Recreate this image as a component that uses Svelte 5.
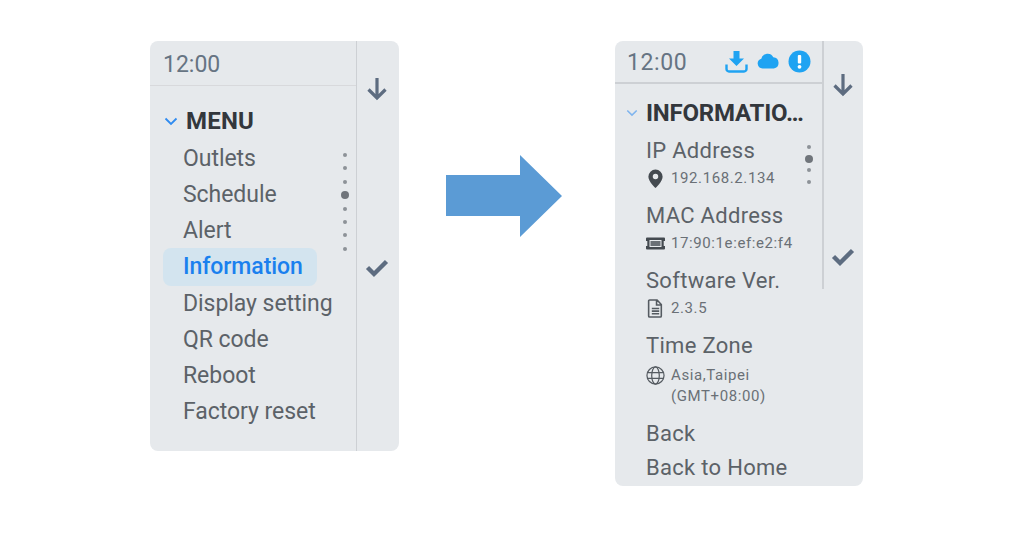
<script>
  const menuItems = ['Outlets', 'Schedule', 'Alert', 'Information', 'Display setting', 'QR code', 'Reboot', 'Factory reset'];
  const activeItem = 'Information';
  const menuDots = [0, 1, 2, 3, 4, 5, 6, 7];
  const infoDots = [0, 1, 2, 3];
</script>

{#snippet arrowDown()}
  <svg class="side-icon" viewBox="0 0 24 24"><path d="M12 1v20M3.500 12.500L12 21l8.500-8.500" fill="none" stroke="currentColor" stroke-width="3.200"/></svg>
{/snippet}

{#snippet check()}
  <svg class="side-icon" viewBox="0 0 24 24"><path d="M2.500 12.500l6.500 6.500L21.500 6.500" fill="none" stroke="currentColor" stroke-width="4.400"/></svg>
{/snippet}

{#snippet chevron()}
  <svg class="chevron" viewBox="0 0 14 9"><path d="M1.500 1.500L7 7l5.500-5.500" fill="none" stroke="currentColor" stroke-width="1.800"/></svg>
{/snippet}

<div class="page">
  <section class="panel menu-panel">
    <div class="main">
      <header class="status"><span class="clock">12:00</span></header>
      <div class="title-row">
        {@render chevron()}
        <h2>MENU</h2>
      </div>
      <ul class="menu">
        {#each menuItems as item}
          <li class:active={item === activeItem}>{item}</li>
        {/each}
      </ul>
      <div class="dots menu-dots">
        {#each menuDots as d}
          <i class:big={d === 3}></i>
        {/each}
      </div>
    </div>
    <aside class="side">
      {@render arrowDown()}
      {@render check()}
    </aside>
  </section>

  <svg class="big-arrow" viewBox="0 0 116 82"><path d="M0 20H74V0L116 41 74 82V61H0Z" fill="#5b9bd5"/></svg>

  <section class="panel info-panel">
    <div class="main">
      <header class="status">
        <span class="clock">12:00</span>
        <div class="status-icons">
          <svg width="23" height="23" viewBox="0 0 23 23"><path d="M8.500 1h6v7.500h4.500l-7.500 7.500L4 8.500h4.500z" fill="#1fa3f2"/><path d="M1.500 14.500v4.500a2.500 2.500 0 0 0 2.500 2.500h15a2.500 2.500 0 0 0 2.500-2.500v-4.500" fill="none" stroke="#1fa3f2" stroke-width="2.400"/></svg>
          <svg width="22" height="16" viewBox="0 0 22 16"><path d="M5.500 15.500a5 5 0 0 1-1.200-9.800 6.500 6.500 0 0 1 12-1.500 5.700 5.700 0 0 1 .5 11.300z" fill="#1fa3f2"/></svg>
          <svg width="23" height="23" viewBox="0 0 23 23"><circle cx="11.500" cy="11.500" r="11" fill="#1fa3f2"/><rect x="9.800" y="5" width="3.400" height="8.500" rx="1" fill="#fff"/><circle cx="11.500" cy="16.800" r="1.900" fill="#fff"/></svg>
        </div>
      </header>
      <div class="title-row">
        {@render chevron()}
        <h2>INFORMATIO…</h2>
      </div>
      <div class="info">
        <div class="info-item">
          <div class="label">IP Address</div>
          <div class="value">
            <svg class="value-icon" viewBox="0 0 16 16"><path d="M8 .5a6 6 0 0 0-6 6c0 4 6 9.500 6 9.500s6-5.500 6-9.500a6 6 0 0 0-6-6zm0 8.200a2.300 2.300 0 1 1 0-4.600 2.300 2.300 0 0 1 0 4.600z" fill="#444a50"/></svg>
            <span>192.168.2.134</span>
          </div>
        </div>
        <div class="info-item">
          <div class="label">MAC Address</div>
          <div class="value">
            <svg class="value-icon" viewBox="0 0 19 13"><path fill-rule="evenodd" d="M1 .5h17a1 1 0 0 1 1 1v2.500h-1.300v5H19v2.500a1 1 0 0 1-1 1H1a1 1 0 0 1-1-1V9h1.300V4H0V1.500a1 1 0 0 1 1-1zM3.500 3v7h12V3z" fill="#444a50"/><rect x="4.500" y="4" width="10" height="5" fill="#6a7076"/></svg>
            <span>17:90:1e:ef:e2:f4</span>
          </div>
        </div>
        <div class="info-item">
          <div class="label">Software Ver.</div>
          <div class="value">
            <svg class="value-icon" viewBox="0 0 16 18"><path d="M2.500 1h7l4 4.200V16a1 1 0 0 1-1 1h-10a1 1 0 0 1-1-1V2a1 1 0 0 1 1-1zM9 1.500v4.200h4M4.500 9h7M4.500 11.500h7M4.500 14h7" fill="none" stroke="#555b61" stroke-width="1.500"/></svg>
            <span>2.3.5</span>
          </div>
        </div>
        <div class="info-item zone">
          <div class="label">Time Zone</div>
          <div class="value">
            <svg class="value-icon" viewBox="0 0 20 20"><g fill="none" stroke="#555b61" stroke-width="1.300"><circle cx="10" cy="10" r="9"/><ellipse cx="10" cy="10" rx="4" ry="9"/><path d="M1.500 7h17M1.500 13h17"/></g></svg>
            <span>Asia,Taipei<br />(GMT+08:00)</span>
          </div>
        </div>
        <div class="action">Back</div>
        <div class="action">Back to Home</div>
      </div>
      <div class="dots info-dots">
        {#each infoDots as d}
          <i class:big={d === 1}></i>
        {/each}
      </div>
    </div>
    <aside class="side">
      {@render arrowDown()}
      {@render check()}
    </aside>
  </section>
</div>

<style>
  :global(body) {
    margin: 0;
    background: #fff;
  }

  .page {
    width: 1030px;
    height: 540px;
    box-sizing: border-box;
    padding: 41px 0 0 150px;
    display: flex;
    align-items: flex-start;
    font-family: Roboto, "Liberation Sans", sans-serif;
    color: #5c6268;
  }

  .panel {
    width: 249px;
    flex: none;
    display: flex;
    align-items: flex-start;
    background: #e6e9ec;
    border-radius: 8px;
    overflow: hidden;
  }

  .menu-panel {
    height: 410px;
  }

  .info-panel {
    height: 445px;
    width: 248px;
  }

  .big-arrow {
    width: 116px;
    height: 82px;
    flex: none;
    margin: 114px 53px 0 47px;
  }

  .main {
    position: relative;
    width: 206px;
    flex: none;
  }

  .info-panel .main {
    width: 207px;
  }

  .side {
    width: 42px;
    flex: none;
    box-sizing: border-box;
    border-left: 1px solid #cdd0d4;
    color: #5d6c80;
    display: flex;
    flex-direction: column;
    align-items: center;
    height: 410px;
    padding: 36px 2px 0 0;
    gap: 154px;
  }

  .info-panel .side {
    height: 248px;
    border-left: 2px solid #cdd0d4;
    padding-top: 32px;
    gap: 147px;
  }

  .side-icon {
    width: 24px;
    height: 24px;
  }

  .status {
    height: 45px;
    box-sizing: border-box;
    border-bottom: 1px solid #d8d9dc;
    padding-left: 13px;
    display: flex;
    align-items: center;
    justify-content: space-between;
  }

  .info-panel .status {
    height: 43px;
    border-bottom: 2px solid #cdd0d4;
    padding: 0 11px 0 12px;
  }

  .clock {
    font-size: 23px;
    color: #667483;
    padding-top: 2px;
  }

  .info-panel .clock {
    letter-spacing: 0.6px;
    padding-top: 1px;
  }

  .status-icons {
    display: flex;
    align-items: center;
    gap: 9px;
    margin-top: -1px;
  }

  .title-row {
    display: flex;
    align-items: center;
    height: 35px;
    margin-top: 18px;
    padding-left: 14px;
    color: #2f8bf0;
  }

  .info-panel .title-row {
    margin-top: 13px;
    height: 32px;
    padding-left: 11px;
    color: #7fb4ee;
  }

  .chevron {
    width: 14px;
    height: 9px;
    margin-right: 8px;
  }

  .info-panel .chevron {
    width: 12px;
    height: 8px;
    margin-right: 8px;
  }

  h2 {
    margin: 0;
    font-size: 24px;
    font-weight: 700;
    letter-spacing: 0.2px;
    color: #33373c;
    line-height: 35px;
  }

  .info-panel h2 {
    letter-spacing: -0.2px;
  }

  .menu {
    list-style: none;
    margin: 2px 0 0;
    padding: 0 0 0 13px;
  }

  .menu li {
    width: 154px;
    height: 36.200px;
    box-sizing: border-box;
    padding-left: 20px;
    font-size: 23px;
    letter-spacing: -0.05px;
    line-height: 36px;
    white-space: nowrap;
    border-radius: 8px;
  }

  /* box starts 2px above the row, the rows below stay on their pitch */
  .menu li.active {
    margin-top: -2px;
    height: 38.200px;
    padding-top: 1px;
    background: #d3e4ef;
    color: #1a80ee;
    font-weight: 500;
  }

  .dots {
    position: absolute;
    display: flex;
    flex-direction: column;
    align-items: center;
  }

  .dots i {
    width: 4px;
    height: 4px;
    border-radius: 50%;
    background: #8d9298;
  }

  .dots i.big {
    width: 8px;
    height: 8px;
    margin: -2px 0;
    background: #70757b;
  }

  .menu-dots {
    left: 191px;
    top: 112px;
    gap: 9.400px;
    width: 8px;
  }

  .info-dots {
    left: 190px;
    top: 104px;
    gap: 7.700px;
    width: 8px;
  }

  .info {
    padding: 5px 0 0 31px;
    white-space: nowrap;
  }

  .info-item {
    margin-bottom: 10px;
  }

  .zone .value {
    margin-top: 2px;
  }

  .label, .action {
    font-size: 22px;
    letter-spacing: 0.3px;
    line-height: 34px;
  }

  .value {
    display: flex;
    align-items: flex-start;
    gap: 6px;
    font-size: 15px;
    letter-spacing: 0.6px;
    line-height: 21px;
    color: #6a7076;
  }

  .value-icon {
    width: 19px;
    height: 19px;
    flex: none;
    margin-top: 1px;
  }
</style>
